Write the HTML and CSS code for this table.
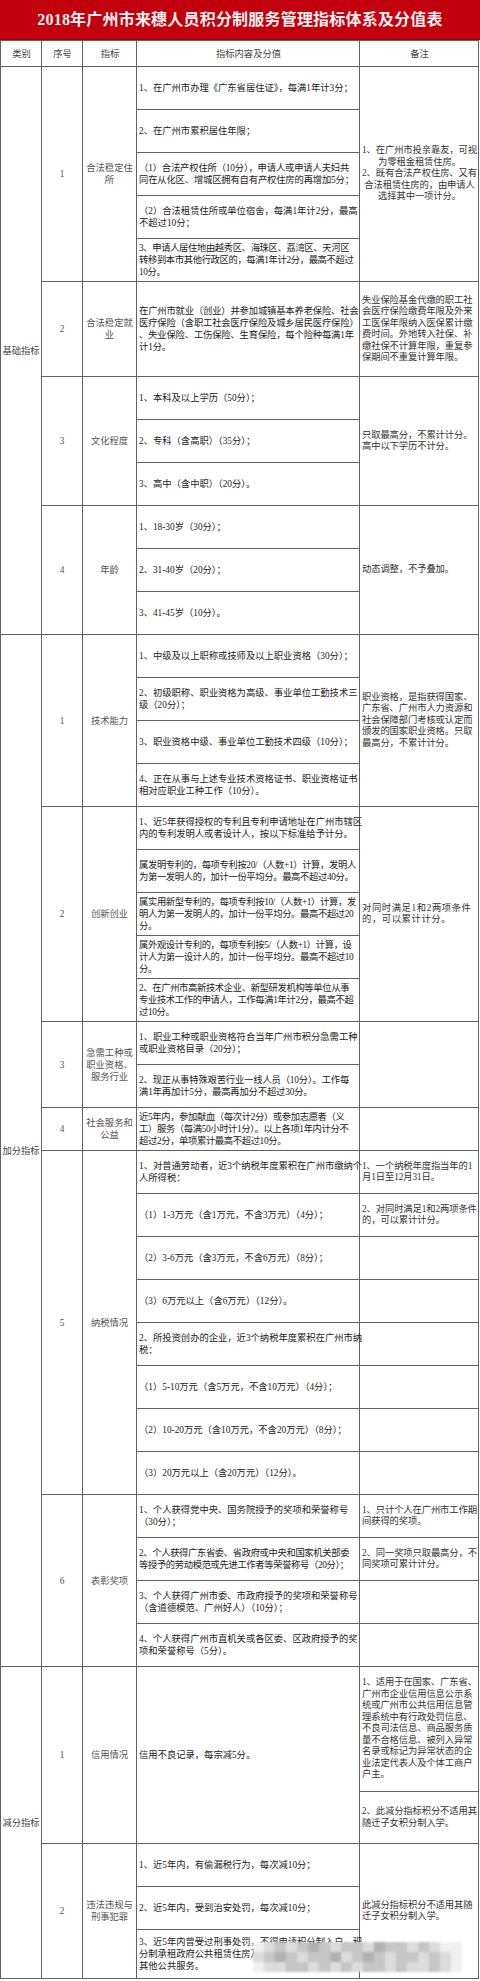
FILE: index.html
```html
<!DOCTYPE html>
<html lang="zh-CN">
<head>
<meta charset="utf-8">
<title>2018年广州市来穗人员积分制服务管理指标体系及分值表</title>
<link rel="stylesheet" href="styles.css">
</head>
<body>
<div class="page">
  <div class="title">2018年广州市来穗人员积分制服务管理指标体系及分值表</div>
  <table class="tbl">
    <colgroup>
      <col class="w-cat"><col class="w-num"><col class="w-ind"><col class="w-con"><col class="w-rem">
    </colgroup>
    <tr class="hd"><th>类别</th><th>序号</th><th>指标</th><th>指标内容及分值</th><th>备注</th></tr>

    <tr>
      <td class="cat" rowspan="12">基础指标</td>
      <td class="num" rowspan="5">1</td>
      <td class="ind" rowspan="5">合法稳定住<br>所</td>
      <td class="c">1、在广州市办理《广东省居住证》，每满1年计3分；</td>
      <td class="r rc" rowspan="5">1、在广州市投亲靠友，可视<br>为零租金租赁住房。<br>2、既有合法产权住房、又有<br>合法租赁住房的，由申请人<br>选择其中一项计分。</td>
    </tr>
    <tr><td class="c">2、在广州市累积居住年限；</td></tr>
    <tr><td class="c t1">（1）合法产权住所（10分），申请人或申请人夫妇共<br>同在从化区、增城区拥有自有产权住房的再增加5分；</td></tr>
    <tr><td class="c">（2）合法租赁住所或单位宿舍，每满1年计2分，最高<br>不超过10分；</td></tr>
    <tr><td class="c t">3、申请人居住地由越秀区、海珠区、荔湾区、天河区<br>转移到本市其他行政区的，每满1年计2分，最高不超过<br>10分。</td></tr>

    <tr class="h95">
      <td class="num">2</td>
      <td class="ind">合法稳定就<br>业</td>
      <td class="c t1">在广州市就业（创业）并参加城镇基本养老保险、社会<br>医疗保险（含职工社会医疗保险及城乡居民医疗保险）<br>、失业保险、工伤保险、生育保险，每个险种每满1年<br>计1分。</td>
      <td class="r">失业保险基金代缴的职工社<br>会医疗保险缴费年限及外来<br>工医保年限纳入医保累计缴<br>费时间。外地转入社保、补<br>缴社保不计算年限，重复参<br>保期间不重复计算年限。</td>
    </tr>

    <tr>
      <td class="num" rowspan="3">3</td>
      <td class="ind" rowspan="3">文化程度</td>
      <td class="c">1、本科及以上学历（50分）；</td>
      <td class="r" rowspan="3">只取最高分，不累计计分。<br>高中以下学历不计分。</td>
    </tr>
    <tr><td class="c">2、专科（含高职）（35分）；</td></tr>
    <tr><td class="c">3、高中（含中职）（20分）。</td></tr>

    <tr>
      <td class="num" rowspan="3">4</td>
      <td class="ind" rowspan="3">年龄</td>
      <td class="c">1、18-30岁（30分）；</td>
      <td class="r" rowspan="3">动态调整，不予叠加。</td>
    </tr>
    <tr><td class="c">2、31-40岁（20分）；</td></tr>
    <tr><td class="c">3、41-45岁（10分）。</td></tr>

    <tr>
      <td class="cat" rowspan="24">加分指标</td>
      <td class="num" rowspan="4">1</td>
      <td class="ind" rowspan="4">技术能力</td>
      <td class="c">1、中级及以上职称或技师及以上职业资格（30分）；</td>
      <td class="r" rowspan="4">职业资格，是指获得国家、<br>广东省、广州市人力资源和<br>社会保障部门考核或认定而<br>颁发的国家职业资格。只取<br>最高分，不累计计分。</td>
    </tr>
    <tr><td class="c">2、初级职称、职业资格为高级、事业单位工勤技术三<br>级（20分）；</td></tr>
    <tr><td class="c">3、职业资格中级、事业单位工勤技术四级（10分）；</td></tr>
    <tr><td class="c">4、正在从事与上述专业技术资格证书、职业资格证书<br>相对应职业工种工作（10分）。</td></tr>

    <tr>
      <td class="num" rowspan="5">2</td>
      <td class="ind" rowspan="5">创新创业</td>
      <td class="c">1、近5年获得授权的专利且专利申请地址在广州市辖区<br>内的专利发明人或者设计人，按以下标准给予计分。</td>
      <td class="r rj" rowspan="5">对同时满足1和2两项条件<br>的，可以累计计分。</td>
    </tr>
    <tr><td class="c t">属发明专利的，每项专利按20/（人数+1）计算，发明人<br>为第一发明人的，加计一份平均分。最高不超过40分。</td></tr>
    <tr><td class="c t">属实用新型专利的，每项专利按10/（人数+1）计算，发<br>明人为第一发明人的，加计一份平均分。最高不超过20<br>分。</td></tr>
    <tr><td class="c t">属外观设计专利的，每项专利按5/（人数+1）计算，设<br>计人为第一设计人的，加计一份平均分。最高不超过10<br>分。</td></tr>
    <tr><td class="c t">2、在广州市高新技术企业、新型研发机构等单位从事<br>专业技术工作的申请人，工作每满1年计2分，最高不超<br>过10分。</td></tr>

    <tr>
      <td class="num" rowspan="2">3</td>
      <td class="ind" rowspan="2">急需工种或<br>职业资格、<br>服务行业</td>
      <td class="c">1、职业工种或职业资格符合当年广州市积分急需工种<br>或职业资格目录（20分）；</td>
      <td class="r" rowspan="2"></td>
    </tr>
    <tr><td class="c t1">2、现正从事特殊艰苦行业一线人员（10分）。工作每<br>满1年再加计5分，最高再加分不超过30分。</td></tr>

    <tr>
      <td class="num">4</td>
      <td class="ind">社会服务和<br>公益</td>
      <td class="c t">近5年内，参加献血（每次计2分）或参加志愿者（义<br>工）服务（每满50小时计1分）。以上各项1年内计分不<br>超过2分，单项累计最高不超过10分。</td>
      <td class="r"></td>
    </tr>

    <tr>
      <td class="num" rowspan="8">5</td>
      <td class="ind" rowspan="8">纳税情况</td>
      <td class="c">1、对普通劳动者，近3个纳税年度累积在广州市缴纳个<br>人所得税：</td>
      <td class="r">1、一个纳税年度指当年的1<br>月1日至12月31日。</td>
    </tr>
    <tr><td class="c">（1）1-3万元（含1万元，不含3万元）（4分）；</td><td class="r">2、对同时满足1和2两项条件<br>的，可以累计计分。</td></tr>
    <tr><td class="c">（2）3-6万元（含3万元，不含6万元）（8分）；</td><td class="r"></td></tr>
    <tr><td class="c">（3）6万元以上（含6万元）（12分）。</td><td class="r"></td></tr>
    <tr><td class="c">2、所投资创办的企业，近3个纳税年度累积在广州市纳<br>税：</td><td class="r"></td></tr>
    <tr><td class="c">（1）5-10万元（含5万元，不含10万元）（4分）；</td><td class="r"></td></tr>
    <tr><td class="c">（2）10-20万元（含10万元，不含20万元）（8分）；</td><td class="r"></td></tr>
    <tr><td class="c">（3）20万元以上（含20万元）（12分）。</td><td class="r"></td></tr>

    <tr>
      <td class="num" rowspan="4">6</td>
      <td class="ind" rowspan="4">表彰奖项</td>
      <td class="c">1、个人获得党中央、国务院授予的奖项和荣誉称号<br>（30分）；</td>
      <td class="r">1、只计个人在广州市工作期<br>间获得的奖项。</td>
    </tr>
    <tr><td class="c t">2、个人获得广东省委、省政府或中央和国家机关部委<br>等授予的劳动模范或先进工作者等荣誉称号（20分）；</td><td class="r">2、同一奖项只取最高分，不<br>同奖项可累计计分。</td></tr>
    <tr><td class="c">3、个人获得广州市委、市政府授予的奖项和荣誉称号<br>（含道德模范、广州好人）（10分）；</td><td class="r"></td></tr>
    <tr><td class="c">4、个人获得广州市直机关或各区委、区政府授予的奖<br>项和荣誉称号（5分）。</td><td class="r"></td></tr>

    <tr class="h125">
      <td class="cat" rowspan="5">减分指标</td>
      <td class="num" rowspan="2">1</td>
      <td class="ind" rowspan="2">信用情况</td>
      <td class="c" rowspan="2">信用不良记录，每宗减5分。</td>
      <td class="r">1、适用于在国家、广东省、<br>广州市企业信用信息公示系<br>统或广州市公共信用信息管<br>理系统中有行政处罚信息、<br>不良司法信息、商品服务质<br>量不合格信息、被列入异常<br>名录或标记为异常状态的企<br>业法定代表人及个体工商户<br>户主。</td>
    </tr>
    <tr class="h52"><td class="r">2、此减分指标积分不适用其<br>随迁子女积分制入学。</td></tr>

    <tr>
      <td class="num" rowspan="3">2</td>
      <td class="ind" rowspan="3">违法违规与<br>刑事犯罪</td>
      <td class="c">1、近5年内，有偷漏税行为，每次减10分；</td>
      <td class="r" rowspan="3">此减分指标积分不适用其随<br>迁子女积分制入学。</td>
    </tr>
    <tr><td class="c">2、近5年内，受到治安处罚，每次减10分；</td></tr>
    <tr class="h49"><td class="c">3、近5年内曾受过刑事处罚，不得申请积分制入户、积<br>分制承租政府公共租赁住房及享受积分制入学等<br>其他公共服务。</td></tr>
  </table>

  <div class="mosaic" aria-hidden="true">
    <i class="a"></i><i class="b"></i><i class="c"></i><i class="b"></i><i class="c"></i><i class="d"></i><i class="c"></i><i class="b"></i><i class="c"></i><i class="c"></i><i class="b"></i><i class="d"></i><i class="c"></i><i class="c"></i><i class="b"></i><i class="c"></i><i class="b"></i><i class="a"></i><i class="a"></i>
    <i class="b"></i><i class="c"></i><i class="d"></i><i class="c"></i><i class="b"></i><i class="c"></i><i class="c"></i><i class="d"></i><i class="b"></i><i class="c"></i><i class="d"></i><i class="c"></i><i class="b"></i><i class="c"></i><i class="c"></i><i class="b"></i><i class="c"></i><i class="b"></i><i class="a"></i>
    <i class="a"></i><i class="b"></i><i class="b"></i><i class="c"></i><i class="c"></i><i class="b"></i><i class="c"></i><i class="b"></i><i class="c"></i><i class="b"></i><i class="c"></i><i class="c"></i><i class="b"></i><i class="c"></i><i class="b"></i><i class="b"></i><i class="c"></i><i class="b"></i><i class="a"></i>
  </div>
</div>
</body>
</html>
```

FILE: styles.css
```css
html, body {
  margin: 0;
  padding: 0;
  background: #ffffff;
}

body {
  font-family: "Liberation Serif", "Noto Sans CJK SC", serif;
  color: #222222;
}

.page {
  position: relative;
  width: 480px;
}

.title {
  height: 40px;
  background: #c2000d;
  border-bottom: 1px solid #9e0008;
  box-sizing: border-box;
  color: #fbeeee;
  font-size: 16px;
  line-height: 40px;
  text-align: center;
  font-weight: bold;
  letter-spacing: 0.2px;
}

.tbl {
  width: 478px;
  border-collapse: collapse;
  table-layout: fixed;
  font-size: 9.3px;
  line-height: 12px;
}

.w-cat { width: 41px; }
.w-num { width: 41px; }
.w-ind { width: 54px; }
.w-con { width: 223px; }
.w-rem { width: 119px; }

.tbl th,
.tbl td {
  border: 1px solid #626262;
  padding: 0 1px 0 2px;
  vertical-align: middle;
  white-space: nowrap;
  overflow: visible;
}

.tbl tr { height: 43px; }
.tbl tr.hd { height: 26px; }
.tbl tr.h95 { height: 95px; }
.tbl tr.h125 { height: 125px; }
.tbl tr.h52 { height: 52px; }
.tbl tr.h49 { height: 49px; }

.tbl th {
  font-weight: normal;
  color: #444444;
  text-align: center;
}

.cat {
  text-align: center;
  color: #444444;
  padding: 0;
}

.tbl td.cat,
.tbl td.num,
.tbl td.ind {
  padding: 0;
}

.num,
.ind {
  text-align: center;
  color: #555555;
}

.c {
  text-align: left;
  color: #222222;
}

.c.t { letter-spacing: -0.35px; }
.c.t1 { letter-spacing: -0.15px; }

.r {
  text-align: left;
  color: #333333;
  line-height: 11.5px;
  letter-spacing: -0.1px;
}

.rc { text-align: center; }

.rj { letter-spacing: 0.6px; }

.mosaic {
  position: absolute;
  left: 253px;
  top: 1942px;
  width: 209px;
  height: 30px;
  display: grid;
  grid-template-columns: repeat(19, 11px);
  grid-template-rows: repeat(3, 10px);
  filter: blur(1.2px);
}

.mosaic i { display: block; }
.mosaic .a { background: #f1f1f1; }
.mosaic .b { background: #dcdcdc; }
.mosaic .c { background: #c6c6c6; }
.mosaic .d { background: #b2b2b2; }
```
